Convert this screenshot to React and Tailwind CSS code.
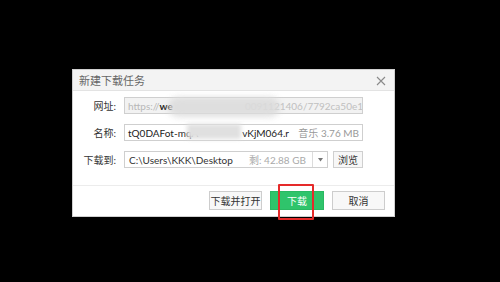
import React from "react";

const font = { fontFamily: 'Lato, "Noto Sans CJK SC", sans-serif' };

export default function App() {
  return (
    <div className="relative w-[500px] h-[282px] bg-black overflow-hidden" style={font}>
      <div className="pt-[69px] pl-[72px]">
        <div className="w-[323px] h-[148px] bg-white flex flex-col border border-[#d0d0d0]">
          {/* title bar */}
          <div className="h-[21px] bg-[#f3f3f3] border-b border-[#e3e3e3] flex items-center justify-between pl-[6px] pr-[8px]">
            <span className="text-[11px] text-[#666] leading-none">新建下载任务</span>
            <svg width="10" height="10" viewBox="0 0 10 10" className="mt-[1px]">
              <path d="M1 1 L9 9 M9 1 L1 9" stroke="#8a8a8a" strokeWidth="1.1" />
            </svg>
          </div>
          {/* body */}
          <div className="flex flex-col pt-[6px] gap-[10px] h-[95px] border-b border-[#ececec]">
            <div className="flex items-center h-[17px]">
              <div className="w-[43px] text-right text-[10px] text-[#333] leading-none">网址:</div>
              <div className="ml-[8px] w-[239px] h-[17px] bg-[#f2f2f2] border border-[#cfcfcf] flex items-center px-[3px] overflow-hidden whitespace-nowrap text-[10px] leading-none">
                <span className="text-[#b8b8b8]">https://</span>
                <span className="text-[#222] font-bold">we</span>
                <span className="w-[72px] shrink-0"></span>
                <span className="text-[#c0c0c0]">0091121406/7792ca50e11</span>
              </div>
            </div>
            <div className="flex items-center h-[17px]">
              <div className="w-[43px] text-right text-[10px] text-[#333] leading-none">名称:</div>
              <div className="ml-[8px] w-[239px] h-[17px] bg-white border border-[#cfcfcf] flex items-center justify-between pl-[3px] pr-[3px] overflow-hidden whitespace-nowrap text-[10px] leading-none">
                <div className="flex items-center">
                  <span className="text-[#222]">tQ0DAFot-mqA</span>
                  <span className="w-[44px] shrink-0"></span>
                  <span className="text-[#222]">vKjM064.r</span>
                </div>
                <span className="text-[#999]">音乐 3.76 MB</span>
              </div>
            </div>
            <div className="flex items-center h-[17px]">
              <div className="w-[43px] text-right text-[10px] text-[#333] leading-none">下载到:</div>
              <div className="ml-[8px] w-[204px] h-[17px] bg-white border border-[#cfcfcf] flex items-center overflow-hidden whitespace-nowrap text-[10px] leading-none">
                <div className="flex-1 flex items-center justify-between pl-[4px] pr-[6px]">
                  <span className="text-[#333]">C:\Users\KKK\Desktop</span>
                  <span className="text-[#aaa]">剩: 42.88 GB</span>
                </div>
                <div className="w-[15px] h-full border-l border-[#dcdcdc] flex items-center justify-center">
                  <svg width="5" height="4" viewBox="0 0 5 4">
                    <path d="M0 0 L5 0 L2.5 3.5 Z" fill="#777" />
                  </svg>
                </div>
              </div>
              <div className="ml-[5px] w-[30px] h-[17px] bg-[#f7f7f7] border border-[#cfcfcf] flex items-center justify-center text-[10px] text-[#333] leading-none">
                浏览
              </div>
            </div>
          </div>
          {/* footer */}
          <div className="flex-1 flex justify-end items-start pt-[5px] pr-[9px] gap-[8px]">
            <div className="w-[53px] h-[19px] bg-[#f8f8f8] border border-[#cdcdcd] flex items-center justify-center text-[10px] text-[#333] leading-none">下载并打开</div>
            <div className="w-[54px] h-[19px] bg-[#2fc46b] border border-[#2ab862] flex items-center justify-center text-[10px] text-white leading-none">下载</div>
            <div className="w-[53px] h-[19px] bg-[#f8f8f8] border border-[#cdcdcd] flex items-center justify-center text-[10px] text-[#333] leading-none">取消</div>
          </div>
        </div>
      </div>
      {/* blur patches */}
      <div className="absolute left-[168px] top-[97px] w-[112px] h-[20px] bg-[#dcdcdc] rounded-full blur-[3px] opacity-90"></div>
      <div className="absolute left-[187px] top-[124px] w-[54px] h-[15px] bg-[#e0e0e0] blur-[2px]"></div>
      {/* red highlight */}
      <div className="absolute left-[278px] top-[184px] w-[36px] h-[36px] border-2 border-[#e52a2a] rounded-[1px]"></div>
    </div>
  );
}
